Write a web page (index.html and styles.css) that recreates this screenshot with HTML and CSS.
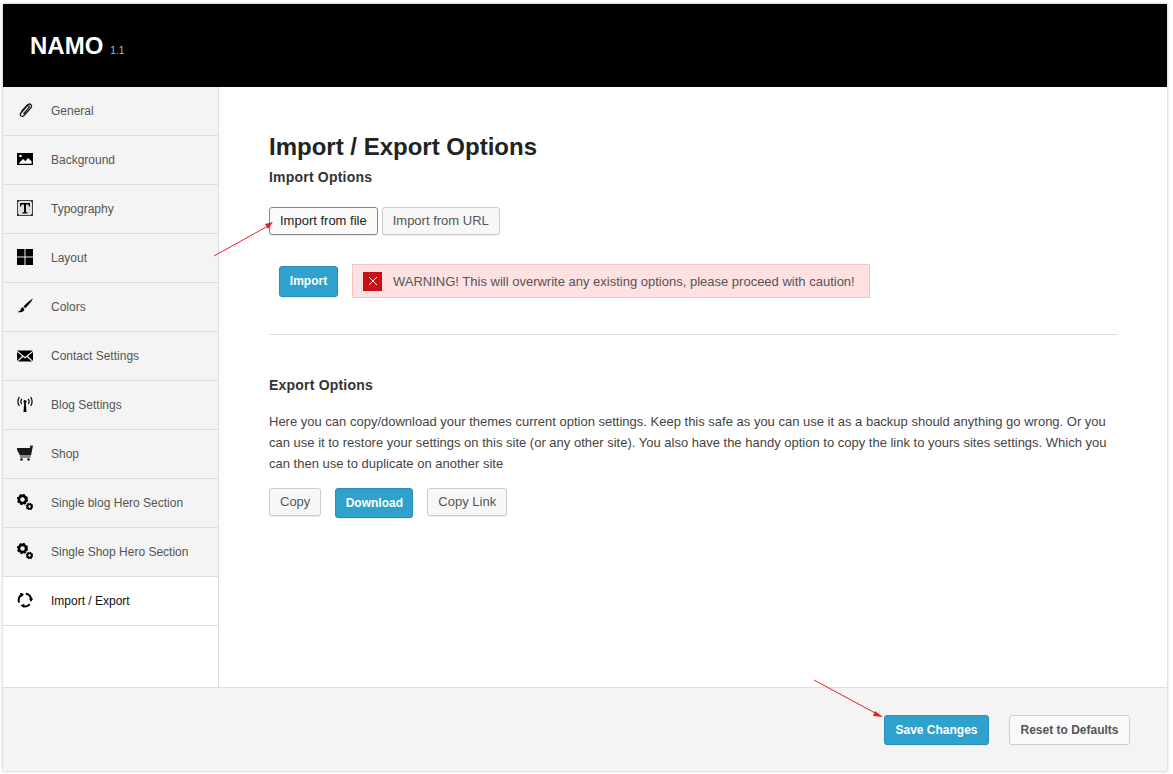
FILE: index.html
```html
<!DOCTYPE html>
<html>
	<head>
		<title>NAMO Options</title>
		<link rel="stylesheet" href="styles.css">
	</head>
	<body>
		<div class="panel">
			<header class="top">
				<h1>NAMO</h1><span class="ver">1.1</span>
			</header>
			<div class="middle">
				<ul class="side">
					<li><svg viewBox="0 0 16 16"><path d="M4.5 9.5 10 3.2c1.2-1.4 3-1.5 3.9-.6.9.9.7 2.5-.4 3.8l-6.3 7c-1 1.100-2.500 1.300-3.300.5-.8-.8-.6-2.200.4-3.400L9.800 4.400c.7-.8 1.600-.9 2.100-.4.500.5.400 1.300-.3 2.100L6.500 12" fill="none" stroke="#111" stroke-width="1.300"/></svg>General</li>
					<li><svg viewBox="0 0 16 16"><path d="M0 2h16v12H0z" fill="#000"/><path d="M1.500 12.800 6 8l2.500 2.300 2.500-3.300 3.600 3.200v2.600z" fill="#fff"/><circle cx="3.500" cy="5" r="1.300" fill="#fff"/></svg>Background</li>
					<li><svg viewBox="0 0 16 16"><path d="M.5.500h15v15H.5z" fill="#ddd" stroke="#444"/><path d="M0 0h2v2H0zM14 0h2v2h-2zM0 14h2v2H0zM14 14h2v2h-2z" fill="#333"/><path d="M3 3h10v3.500h-1L11.300 4.500H9V12l1.500.500V13.500h-5v-1L7 12V4.500H4.700L4 6.500H3z" fill="#000"/></svg>Typography</li>
					<li><svg viewBox="0 0 16 16"><path d="M0 0h7.500v7.500H0zM8.500 0H16v7.500H8.500zM0 8.500h7.500V16H0zM8.500 8.500H16V16H8.500z" fill="#000"/></svg>Layout</li>
					<li><svg viewBox="0 0 16 16"><path d="M16 .5C13 2 9 5.500 6.500 8.500l1.800 1.700C11 7.500 14.500 3.500 16 .5z" fill="#000"/><path d="M5.800 9.300c-1.500.3-1.800 1.300-2.200 2.500-.3 1-1.500 1.700-3.300 2.200 2.500.500 5.700.300 6.700-1.500.5-.9.300-1.700-.100-2.200z" fill="#000"/></svg>Colors</li>
					<li><svg viewBox="0 0 16 16"><path d="M0 3.500h16L8 10zM0 5v9l5-5zM16 5v9l-5-5zM1 14.500l5-4.500 2 1.600 2-1.600 5 4.500z" fill="#000"/></svg>Contact Settings</li>
					<li><svg viewBox="0 0 16 16"><circle cx="8" cy="5.500" r="1.600" fill="#000"/><path d="M7.200 7h1.600l.7 9h-3z" fill="#000"/><path d="M4.800 2.800C3.600 4.500 3.600 6.500 4.800 8.200M11.200 2.800c1.200 1.700 1.200 3.700 0 5.400M2.400 1C.5 3.800.5 7.200 2.400 10M13.600 1c1.900 2.800 1.900 6.200 0 9" fill="none" stroke="#000" stroke-width="1.200"/></svg>Blog Settings</li>
					<li><svg viewBox="0 0 16 16"><path d="M0 3h12.800l.7-2.500H16L14 10.500H3L0 4.800z" fill="#1a1a1a"/><path d="M3 11.500h10.500v1H3z" fill="#1a1a1a"/><circle cx="4.500" cy="14.500" r="1.300" fill="#1a1a1a"/><circle cx="11.500" cy="14.500" r="1.300" fill="#1a1a1a"/></svg>Shop</li>
					<li><svg viewBox="0 0 16 16"><circle cx="5.500" cy="5.500" r="3.600" fill="none" stroke="#000" stroke-width="2.600"/><circle cx="5.500" cy="5.500" r="4.900" fill="none" stroke="#000" stroke-width="1.500" stroke-dasharray="2 1.850"/><circle cx="12.500" cy="12.500" r="2.100" fill="none" stroke="#000" stroke-width="1.800"/><circle cx="12.500" cy="12.500" r="3.200" fill="none" stroke="#000" stroke-width="1.100" stroke-dasharray="1.500 1"/></svg>Single blog Hero Section</li>
					<li><svg viewBox="0 0 16 16"><circle cx="5.500" cy="5.500" r="3.600" fill="none" stroke="#000" stroke-width="2.600"/><circle cx="5.500" cy="5.500" r="4.900" fill="none" stroke="#000" stroke-width="1.500" stroke-dasharray="2 1.850"/><circle cx="12.500" cy="12.500" r="2.100" fill="none" stroke="#000" stroke-width="1.800"/><circle cx="12.500" cy="12.500" r="3.200" fill="none" stroke="#000" stroke-width="1.100" stroke-dasharray="1.500 1"/></svg>Single Shop Hero Section</li>
					<li class="on"><svg viewBox="0 0 16 16"><path d="M2.200 10.500A6.300 6.300 0 0 1 5 2.400M8.800 1.800a6.300 6.300 0 0 1 5.300 6M12.800 12.200a6.300 6.300 0 0 1-7.400 1.500" fill="none" stroke="#000" stroke-width="2"/><path d="M3 .8 7 2 4.400 5.200zM12 6.500l4.200.1-2.300 3.400zM7.500 11.800l-.8 4-3.200-2.600z" fill="#000"/></svg>Import / Export</li>
				</ul>
				<main class="content">
					<h2>Import / Export Options</h2>
					<h3>Import Options</h3>
					<div class="tabs">
						<button class="btn active">Import from file</button>
						<button class="btn">Import from URL</button>
					</div>
					<div class="import-row">
						<button class="btn blue">Import</button>
						<div class="warning">
							<span class="x"><svg viewBox="0 0 10 10"><path d="M1 1l8 8M9 1l-8 8" stroke="#fff" stroke-width="1"/></svg></span>
							WARNING! This will overwrite any existing options, please proceed with caution!
						</div>
					</div>
					<hr>
					<h3 class="export">Export Options</h3>
					<p>Here you can copy/download your themes current option settings. Keep this safe as you can use it as a backup should anything go wrong. Or you can use it to restore your settings on this site (or any other site). You also have the handy option to copy the link to yours sites settings. Which you can then use to duplicate on another site</p>
					<div class="export-btns">
						<button class="btn">Copy</button>
						<button class="btn blue wide">Download</button>
						<button class="btn">Copy Link</button>
					</div>
				</main>
			</div>
			<footer class="bottom">
				<button class="btn blue save">Save Changes</button>
				<button class="btn reset">Reset to Defaults</button>
			</footer>
		</div>
		<svg class="arrows" width="1173" height="774" viewBox="0 0 1173 774">
			<path d="M214 256 268 226M814 680 877 714" stroke="#e8202a" stroke-width="1" fill="none"/>
			<path d="M273 222 265 224 268 229zM883 717 875 711 873 716z" fill="#e8202a"/>
		</svg>
	</body>
</html>
```

FILE: styles.css
```css
html, body {
	height: 100%;
}
body {
	margin: 0;
	padding: 4px 6px 3px 3px;
	box-sizing: border-box;
	background: #fff;
	font-family: "Liberation Sans", Arial, sans-serif;
	color: #444;
}
.panel {
	height: 100%;
	display: flex;
	flex-direction: column;
	box-shadow: 0 0 3px rgba(0, 0, 0, 0.3);
}
.top {
	height: 83px;
	background: #000;
	color: #fff;
	display: flex;
	align-items: baseline;
	padding: 28px 0 0 27px;
	box-sizing: border-box;
}
.top h1 {
	margin: 0;
	font-size: 24px;
	line-height: 28px;
}
.ver {
	margin-left: 7px;
	font-size: 10px;
	color: #bbb;
}
.middle {
	flex: 1;
	display: flex;
	min-height: 0;
	background: #fff;
}
.side {
	width: 215px;
	margin: 0;
	padding: 0;
	list-style: none;
	border-right: 1px solid #ddd;
	flex: none;
}
.side li {
	height: 48px;
	display: flex;
	align-items: center;
	padding-left: 14px;
	background: #f4f4f4;
	border-bottom: 1px solid #ddd;
	font-size: 12px;
	color: #555;
}
.side li svg {
	width: 16px;
	height: 16px;
	margin-right: 18px;
	flex: none;
	position: relative;
	top: -1px;
}
.side li.on {
	background: #fff;
	color: #111;
}
.content {
	flex: 1;
	padding: 45px 50px 0;
}
.content h2 {
	margin: 0;
	font-size: 24px;
	line-height: 30px;
	color: #222;
}
.content h3 {
	margin: 7px 0 0;
	font-size: 14px;
	line-height: 17px;
	color: #333;
	letter-spacing: 0.2px;
}
.btn {
	font-family: inherit;
	font-size: 13px;
	line-height: 26px;
	height: 28px;
	padding: 0 10px;
	border: 1px solid #ccc;
	border-radius: 3px;
	background: #f7f7f7;
	color: #555;
	box-shadow: 0 1px 0 #eee;
	box-sizing: border-box;
}
.btn.active {
	border-color: #888;
	background: #fafafa;
	color: #222;
}
.btn.blue {
	background: #2ea2cc;
	border-color: #298cba;
	color: #fff;
	font-weight: bold;
	font-size: 12px;
}
.tabs {
	display: flex;
	gap: 4px;
	margin-top: 21px;
}
.import-row {
	display: flex;
	align-items: center;
	gap: 14px;
	margin: 29px 0 0 10px;
}
.import-row .blue {
	width: 59px;
	height: 31px;
	padding: 0;
}
.warning {
	display: flex;
	align-items: center;
	height: 34px;
	width: 518px;
	box-sizing: border-box;
	padding-left: 10px;
	background: #ffe1e1;
	border: 1px solid #f7c2c2;
	font-size: 13px;
	color: #555;
}
.x {
	width: 19px;
	height: 19px;
	margin-right: 11px;
	background: #cc0f16;
	display: flex;
	align-items: center;
	justify-content: center;
}
.x svg {
	width: 10px;
	height: 10px;
}
.content hr {
	margin: 36px 0 0;
	border: 0;
	border-top: 1px solid #ddd;
}
.content h3.export {
	margin-top: 42px;
}
.content p {
	margin: 17px 0 0;
	font-size: 13px;
	line-height: 21px;
	color: #444;
}
.export-btns {
	display: flex;
	align-items: center;
	gap: 14px;
	margin-top: 12px;
}
.export-btns .wide {
	width: 78px;
	height: 30px;
	padding: 0;
	margin-top: 2px;
}
.bottom {
	height: 84px;
	flex: none;
	background: #f4f4f4;
	border-top: 1px solid #ddd;
	box-sizing: border-box;
	display: flex;
	justify-content: flex-end;
	align-items: flex-start;
	gap: 20px;
	padding: 27px 37px 0 0;
}
.bottom .btn {
	height: 30px;
	font-size: 12px;
	font-weight: bold;
}
.save {
	width: 105px;
	padding: 0;
}
.reset {
	width: 121px;
	padding: 0;
	background: #fafafa;
	color: #555;
}
.arrows {
	position: absolute;
	left: 0;
	top: 0;
	pointer-events: none;
}
```
